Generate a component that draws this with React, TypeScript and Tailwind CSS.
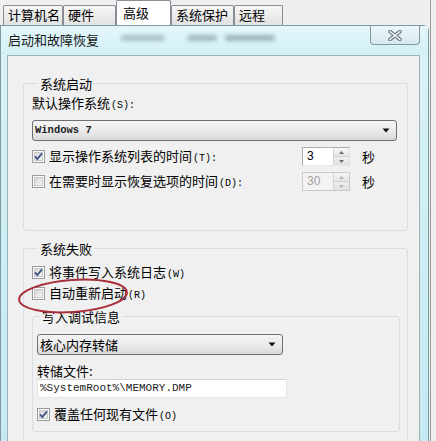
import React from 'react';

const CheckBox = ({ checked }: { checked?: boolean }) => (
  <svg width="13" height="13" viewBox="0 0 13 13" className="shrink-0">
    <defs>
      <linearGradient id="cbg" x1="0" y1="0" x2="1" y2="1">
        <stop offset="0" stopColor="#d4d4d4" />
        <stop offset="1" stopColor="#f7f7f7" />
      </linearGradient>
    </defs>
    <rect x="0.5" y="0.5" width="12" height="12" fill="#fbfbfb" stroke="#9a9b9b" />
    <rect x="2.5" y="2.5" width="8" height="8" fill="url(#cbg)" stroke="#c8c8c8" />
    {checked && (
      <path d="M3 6.3 L5.3 9 L10 3.4" fill="none" stroke="#3f5488" strokeWidth="1.8" />
    )}
  </svg>
);

const Arrow = () => (
  <svg width="8" height="5" viewBox="0 0 8 5">
    <path d="M0.5 0.5 H7.5 L4 4.5 Z" fill="#111" />
  </svg>
);

const Select = ({ text, width, mono }: { text: string; width: string; mono?: boolean }) => (
  <div
    className={`${width} h-[21px] flex items-center justify-between pl-[2px] pr-[6px] rounded-[3px] border border-[#707070] bg-gradient-to-b from-[#f4f4f4] via-[#ebebeb] to-[#d9d9d9]`}
  >
    <span
      className={
        mono
          ? "font-['Liberation_Mono',monospace] text-[10.5px] font-bold text-[#222]"
          : "text-[13px] leading-[15px]"
      }
    >
      {text}
    </span>
    <Arrow />
  </div>
);

const Spin = ({ value, disabled }: { value: string; disabled?: boolean }) => (
  <div
    className={`ml-auto w-[48px] h-[19px] flex border ${
      disabled ? 'border-[#c9c9c9] bg-[#f3f3f3]' : 'border-[#abadb3] border-r-[#dbdfe6] border-b-[#e3e9ef] bg-white'
    }`}
  >
    <span
      className={`flex-1 pl-[4px] font-['Liberation_Sans',sans-serif] text-[12px] leading-[17px] ${
        disabled ? 'text-[#a3a3a3]' : 'text-black'
      }`}
    >
      {value}
    </span>
    <div className="w-[16px] flex flex-col border-l border-[#d5d5d5]">
      <div className="flex-1 flex items-center justify-center bg-gradient-to-b from-[#f6f6f6] to-[#e6e6e6] border-b border-[#d0d0d0]">
        <svg width="5" height="3" viewBox="0 0 5 3">
          <path d="M0 3 L2.5 0 L5 3 Z" fill={disabled ? '#b5b5b5' : '#6b6b6b'} />
        </svg>
      </div>
      <div className="flex-1 flex items-center justify-center bg-gradient-to-b from-[#efefef] to-[#e0e0e0]">
        <svg width="5" height="3" viewBox="0 0 5 3">
          <path d="M0 0 L2.5 3 L5 0 Z" fill={disabled ? '#b5b5b5' : '#6b6b6b'} />
        </svg>
      </div>
    </div>
  </div>
);

const Key = ({ k }: { k: string }) => (
  <span className="font-['Liberation_Mono',monospace] text-[10px] ml-[1px]">{k}</span>
);

const Tab = ({ label, width, active }: { label: string; width: string; active?: boolean }) => (
  <div
    className={
      active
        ? `${width} h-[25px] pt-[4px] pl-[6px] bg-white border border-b-0 border-[#898c95] rounded-t-[2px] text-[13px] leading-[15px]`
        : `${width} h-[20px] pt-[1px] pl-[4px] bg-gradient-to-b from-[#f6f6f6] to-[#e2e2e2] border border-b-0 border-[#898c95] rounded-t-[2px] text-[13px] leading-[15px]`
    }
  >
    {label}
  </div>
);

const App = () => {
  return (
    <div className="relative w-[436px] h-[441px] overflow-hidden bg-[#efefef] flex font-['Noto_Sans_CJK_SC',sans-serif] text-black">
      <div className="w-[431px] h-full flex flex-col border-r border-[#9b9b9b]">
        <div className="h-[27px] flex items-end pl-[3px]">
          <Tab label="计算机名" width="w-[60px]" />
          <Tab label="硬件" width="w-[53px]" />
          <Tab label="高级" width="w-[55px]" active />
          <Tab label="系统保护" width="w-[63px]" />
          <Tab label="远程" width="w-[49px]" />
        </div>

        <div className="w-[429px] flex-1 flex flex-col border border-b-0 border-[#7d9aa2] rounded-tr-[6px] bg-gradient-to-b from-[#dbf3f8] via-[#cdeef4] to-[#c4eaf1]">
          <div className="h-[29px] flex items-start bg-gradient-to-b from-[#e4f7fb] to-[#d2f0f6]">
            <span className="pl-[7px] pt-[6px] text-[13px] leading-[15px] text-[#1b1b1b]">启动和故障恢复</span>
            <span className="ml-[22px] mt-[9px] w-[44px] h-[6px] rounded-full bg-[#a9c0c6] blur-[2px]" />
            <span className="ml-[22px] mt-[9px] w-[30px] h-[6px] rounded-full bg-[#a0b8bf] blur-[2px]" />
            <span className="ml-[8px] mt-[9px] w-[50px] h-[6px] rounded-full bg-[#9ab3ba] blur-[2px]" />
            <div className="ml-auto mr-[8px] w-[50px] h-[19px] flex items-center justify-center rounded-b-[4px] border border-t-0 border-[#8596a0] bg-gradient-to-b from-[#eef8fa] to-[#d5e9ee]">
              <svg width="14" height="11" viewBox="0 0 14 11">
                <path d="M2 1.5 L12 9.5 M12 1.5 L2 9.5" stroke="#6c7c84" strokeWidth="3.6" strokeLinecap="round" />
                <path d="M2 1.5 L12 9.5 M12 1.5 L2 9.5" stroke="#ffffff" strokeWidth="1.4" strokeLinecap="round" />
              </svg>
            </div>
          </div>

          <div className="flex-1 flex pl-[6px] pr-[8px]">
            <div className="w-[413px] flex-1 border border-b-0 border-[#9fb1b7] bg-[#f0f0f0] pt-[20px] pl-[15px] pr-[11px]">
              <fieldset className="w-[385px] border border-[#d5dfe5] rounded-[3px] pl-[8px] pr-[10px] pb-[39px]">
                <legend className="ml-[6px] px-[2px] text-[13px] leading-[15px]">系统启动</legend>
                <div className="mt-[4px] text-[13px] leading-[15px]">
                  默认操作系统<Key k="(S):" />
                </div>
                <div className="mt-[7px]">
                  <Select text="Windows 7" width="w-[365px]" mono />
                </div>
                <div className="mt-[6px] h-[19px] flex items-center">
                  <CheckBox checked />
                  <span className="ml-[4px] text-[13px] leading-[15px]">
                    显示操作系统列表的时间<Key k="(T):" />
                  </span>
                  <Spin value="3" />
                  <span className="ml-[12px] mr-[22px] text-[13px] leading-[15px]">秒</span>
                </div>
                <div className="mt-[6px] h-[19px] flex items-center">
                  <CheckBox />
                  <span className="ml-[4px] text-[13px] leading-[15px]">
                    在需要时显示恢复选项的时间<Key k="(D):" />
                  </span>
                  <Spin value="30" disabled />
                  <span className="ml-[12px] mr-[22px] text-[13px] leading-[15px]">秒</span>
                </div>
              </fieldset>

              <fieldset className="mt-[10px] w-[385px] border border-[#d5dfe5] rounded-[3px] pl-[8px] pr-[7px] pb-[20px]">
                <legend className="ml-[6px] px-[2px] text-[13px] leading-[15px]">系统失败</legend>
                <div className="mt-[9px] h-[15px] flex items-center">
                  <CheckBox checked />
                  <span className="ml-[4px] text-[13px] leading-[15px]">
                    将事件写入系统日志<Key k="(W)" />
                  </span>
                </div>
                <div className="mt-[6px] h-[15px] flex items-center">
                  <CheckBox />
                  <span className="ml-[4px] text-[13px] leading-[15px]">
                    自动重新启动<Key k="(R)" />
                  </span>
                </div>

                <fieldset className="mt-[8px] w-[368px] border border-[#d5dfe5] rounded-[3px] pl-[4px] pb-[9px]">
                  <legend className="ml-[3px] px-[2px] text-[13px] leading-[15px]">写入调试信息</legend>
                  <div className="mt-[10px]">
                    <Select text="核心内存转储" width="w-[246px]" />
                  </div>
                  <div className="mt-[8px] text-[13px] leading-[15px]">转储文件:</div>
                  <div className="mt-[1px] w-[250px] h-[19px] flex items-center pl-[2px] bg-white border border-[#e2e6ea] border-t-[#cfd4d9]">
                    <span className="font-['Liberation_Mono',monospace] text-[11px] text-[#222]">%SystemRoot%\MEMORY.DMP</span>
                  </div>
                  <div className="mt-[9px] h-[15px] flex items-center">
                    <CheckBox checked />
                    <span className="ml-[4px] text-[13px] leading-[15px]">
                      覆盖任何现有文件<Key k="(O)" />
                    </span>
                  </div>
                </fieldset>
              </fieldset>
            </div>
          </div>
        </div>
      </div>

      <svg className="absolute left-[16px] top-[276px]" width="116" height="40" viewBox="0 0 116 40">
        <ellipse cx="57" cy="20" rx="54" ry="16" fill="none" stroke="#a8303a" strokeWidth="2" transform="rotate(-4 57 20)" />
      </svg>
    </div>
  );
};

export default App;
